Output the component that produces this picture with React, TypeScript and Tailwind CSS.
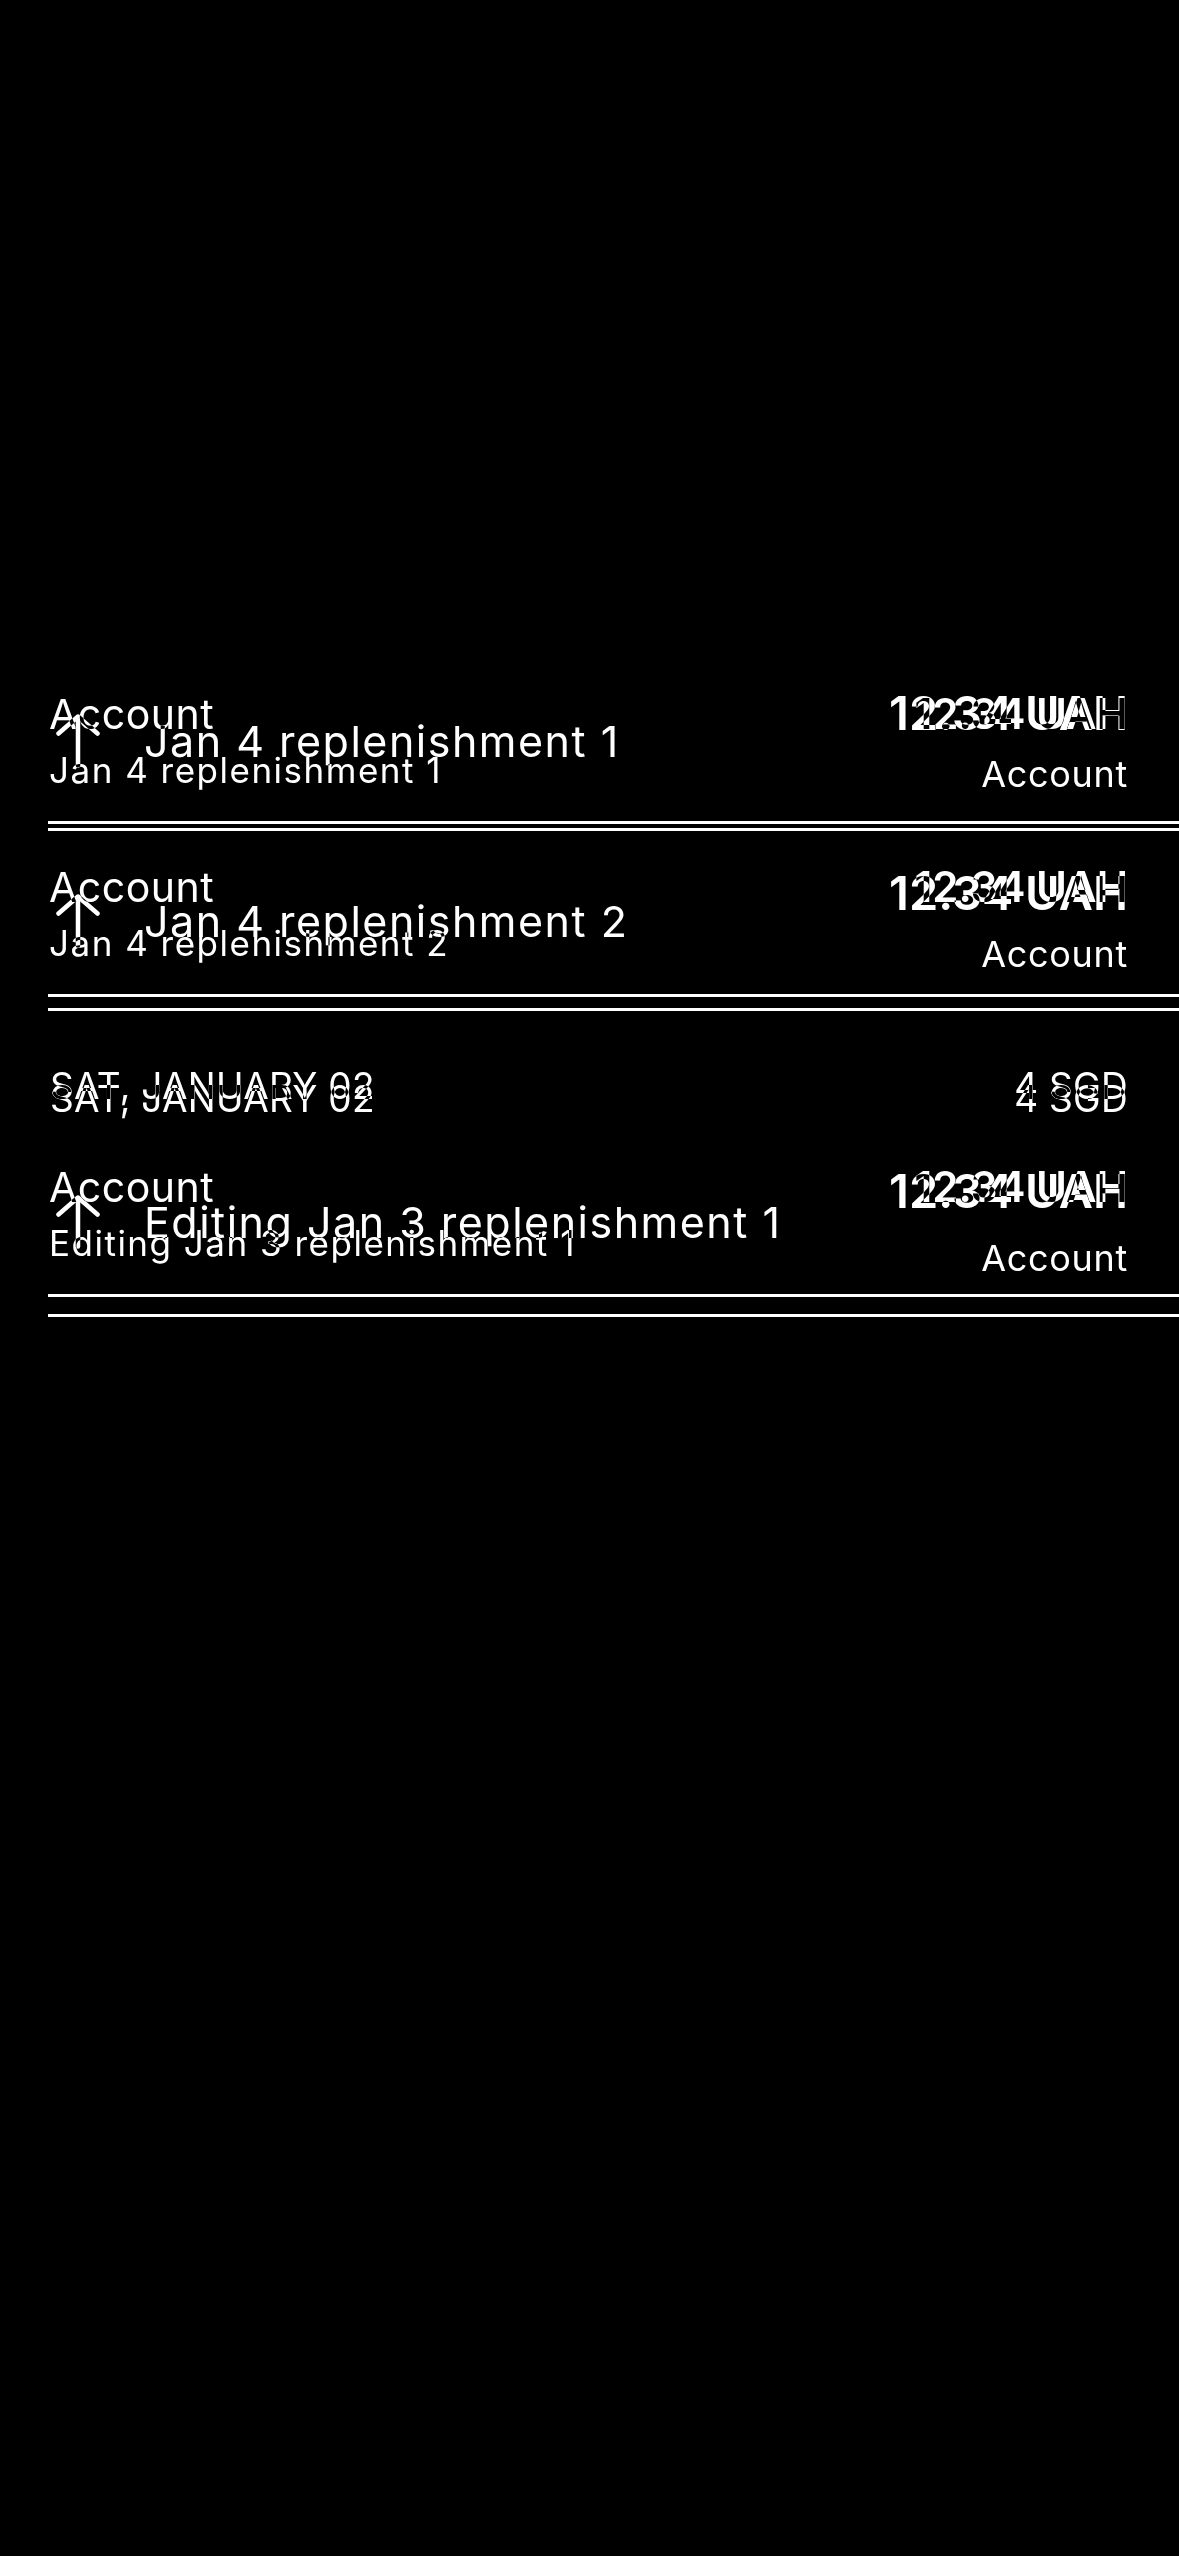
import React from "react";

function Arrow() {
  return (
    <svg width="46" height="54" viewBox="0 0 46 54" className="ml-[7px] shrink-0" fill="none" stroke="white" strokeWidth="4.5" strokeLinecap="round" strokeLinejoin="round">
      <path d="M23 3 V51.5" />
      <path d="M3.5 19.5 L23 2.5 L42.5 19.5" />
    </svg>
  );
}

function RowA({ title, extra }: { title: string; extra?: boolean }) {
  return (
    <div className={"ml-[48px] border-b-[3px] border-white pt-[39px] pr-[51px] flex items-center justify-between " + (extra ? "pb-[38px]" : "pb-[36px]")}>
      <div className="flex items-center">
        <Arrow />
        <div className="ml-[43px] text-[43px] leading-[41px] tracking-[1.5px] text-white">{title}</div>
      </div>
      <div className="flex flex-col items-end">
        <div className="text-[47px] leading-[46px] font-semibold text-white">12.34 UAH</div>
        <div className={(extra ? "mt-[27px]" : "mt-[21px]") + " text-[36px] leading-[35px] tracking-[0.7px] text-white"}>Account</div>
      </div>
    </div>
  );
}

function RowB({ title }: { title: string }) {
  return (
    <div className="ml-[48px] border-b-[3px] border-white pt-[43px] pb-[34px] pr-[51px] flex items-start justify-between">
      <div className="flex flex-col pl-[1px]">
        <div className="text-[41px] leading-[40px] tracking-[0.5px] text-white">Account</div>
        <div className="mt-[20px] text-[35px] leading-[33px] tracking-[1.5px] text-white">{title}</div>
      </div>
      <div className="-mt-[1px] text-[42px] leading-[42px] font-semibold text-white">12.34 UAH</div>
    </div>
  );
}

function Header({ top, bottom }: { top: string; bottom: string }) {
  return (
    <div className={"ml-[48px] pl-[2px] pr-[51px] flex justify-between text-[37px] leading-[37px] tracking-[0.3px] text-white " + top + " " + bottom}>
      <span>SAT, JANUARY 02</span>
      <span>4 SGD</span>
    </div>
  );
}

export default function App() {
  return (
    <div className="w-[1179px] h-[2556px] bg-black overflow-hidden [font-family:Inter,'Noto_Sans',sans-serif] grid">
      <div className="col-start-1 row-start-1 flex flex-col pt-[651px]">
        <RowB title="Jan 4 replenishment 1" />
        <RowB title="Jan 4 replenishment 2" />
        <Header top="pt-[70px]" bottom="pb-[20px]" />
        <RowB title="Editing Jan 3 replenishment 1" />
      </div>
      <div className="col-start-1 row-start-1 flex flex-col pt-[651px] mix-blend-difference">
        <RowA title="Jan 4 replenishment 1" />
        <RowA title="Jan 4 replenishment 2" />
        <Header top="pt-[69px]" bottom="pb-[12px]" />
        <RowA title="Editing Jan 3 replenishment 1" extra />
      </div>
    </div>
  );
}
